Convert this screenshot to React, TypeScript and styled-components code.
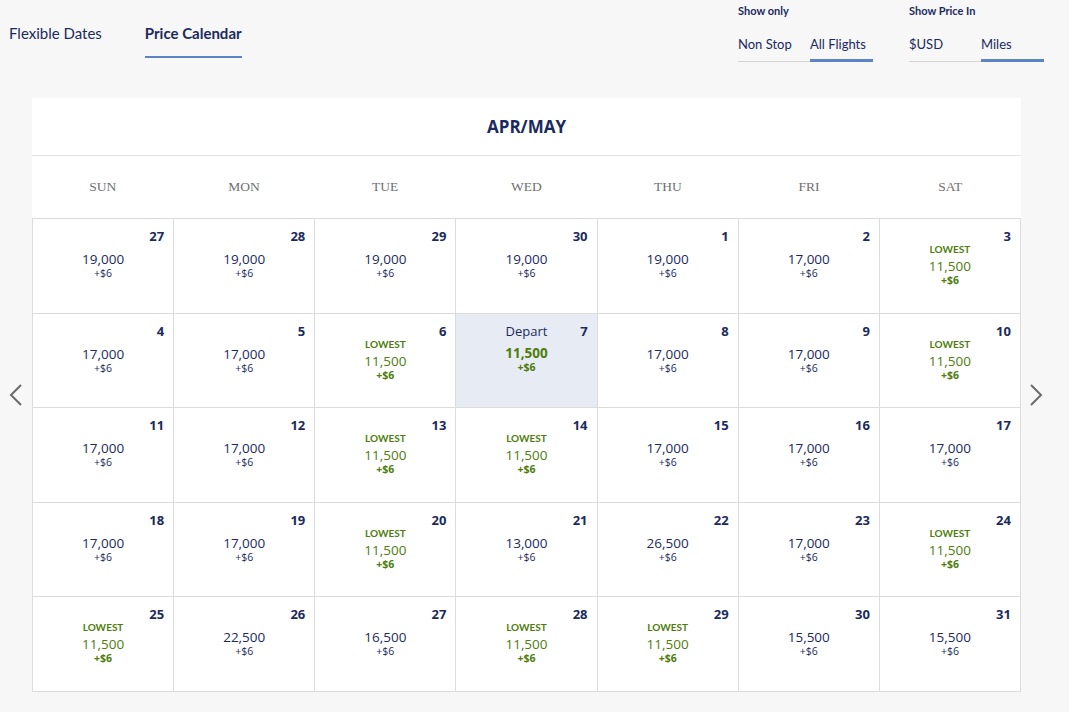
import React from 'react';
import styled, { createGlobalStyle } from 'styled-components';

const GlobalStyle = createGlobalStyle`
    html, body {
        margin: 0;
        padding: 0;
        background: #f7f7f7;
    }
    body {
        font-family: "Open Sans", "Liberation Sans", sans-serif;
        color: #1b2a5e;
    }
`;

const NAVY = '#1b2a5e';
const GREEN = '#4e7d0c';
const BLUE_BAR = '#5a84c6';

type DayKind = 'regular' | 'lowest' | 'depart';

interface Day {
    date: number;
    price: string;
    kind: DayKind;
}

const r = (date: number, price: string): Day => ({ date, price, kind: 'regular' });
const low = (date: number): Day => ({ date, price: '11,500', kind: 'lowest' });

const weeks: Day[][] = [
    [r(27, '19,000'), r(28, '19,000'), r(29, '19,000'), r(30, '19,000'), r(1, '19,000'), r(2, '17,000'), low(3)],
    [r(4, '17,000'), r(5, '17,000'), low(6), { date: 7, price: '11,500', kind: 'depart' }, r(8, '17,000'), r(9, '17,000'), low(10)],
    [r(11, '17,000'), r(12, '17,000'), low(13), low(14), r(15, '17,000'), r(16, '17,000'), r(17, '17,000')],
    [r(18, '17,000'), r(19, '17,000'), low(20), r(21, '13,000'), r(22, '26,500'), r(23, '17,000'), low(24)],
    [low(25), r(26, '22,500'), r(27, '16,500'), low(28), low(29), r(30, '15,500'), r(31, '15,500')],
];

const weekdays = ['SUN', 'MON', 'TUE', 'WED', 'THU', 'FRI', 'SAT'];

const Page = styled.div`
    width: 1069px;
    height: 712px;
    display: flex;
    flex-direction: column;
    box-sizing: border-box;
`;

const TopBar = styled.div`
    height: 98px;
    display: flex;
    justify-content: space-between;
    align-items: flex-start;
    font-family: Lato, "Open Sans", sans-serif;
`;

const ViewTabs = styled.div`
    display: flex;
    gap: 43px;
    padding: 22px 0 0 9px;
`;

const ViewTab = styled.div<{ $active?: boolean }>`
    font-size: 15px;
    line-height: 22px;
    padding-bottom: 12px;
    color: ${NAVY};
    font-weight: ${p => (p.$active ? 700 : 400)};
    border-bottom: 2px solid ${p => (p.$active ? BLUE_BAR : 'transparent')};
`;

const Filters = styled.div`
    display: flex;
    gap: 36px;
    padding: 4px 25px 0 0;
`;

const FilterGroup = styled.div`
    display: flex;
    flex-direction: column;
`;

const FilterLabel = styled.div`
    font-size: 11px;
    font-weight: 700;
    line-height: 14px;
    color: ${NAVY};
    margin-bottom: 17px;
`;

const Toggle = styled.div`
    display: flex;
    border-bottom: 1px solid #d4d4d4;
`;

const ToggleOption = styled.div<{ $active?: boolean; $w: number }>`
    width: ${p => p.$w}px;
    font-size: 13px;
    line-height: 18px;
    padding-bottom: 6px;
    color: ${NAVY};
    border-bottom: 3px solid ${p => (p.$active ? BLUE_BAR : 'transparent')};
    margin-bottom: -1px;
`;

const Stage = styled.div`
    display: grid;
    grid-template-columns: 32px 989px 30px;
    align-items: center;
`;

const Arrow = styled.button`
    background: none;
    border: none;
    padding: 0;
    display: flex;
    justify-content: center;
    align-items: center;
    cursor: pointer;
`;

const Card = styled.div`
    background: #fff;
`;

const MonthTitle = styled.div`
    height: 58px;
    display: flex;
    align-items: center;
    justify-content: center;
    font-size: 17px;
    font-weight: 700;
    color: ${NAVY};
    border-bottom: 1px solid #e4e4e4;
    box-sizing: border-box;
`;

const WeekdayRow = styled.div`
    height: 62px;
    display: grid;
    grid-template-columns: repeat(7, 1fr);
    align-items: center;
`;

const Weekday = styled.div`
    text-align: center;
    font-family: "Liberation Serif", "DejaVu Serif", serif;
    font-size: 13.5px;
    color: #707070;
`;

const Grid = styled.div`
    display: grid;
    grid-template-columns: repeat(7, 1fr);
    grid-template-rows: repeat(5, 94.6px);
    border-top: 1px solid #dcdcdc;
    border-left: 1px solid #dcdcdc;
`;

const Cell = styled.div<{ $selected?: boolean }>`
    display: grid;
    border-right: 1px solid #dcdcdc;
    border-bottom: 1px solid #dcdcdc;
    background: ${p => (p.$selected ? '#e7ebf3' : '#fff')};
    box-sizing: border-box;
`;

const DateNum = styled.div`
    grid-area: 1 / 1;
    justify-self: end;
    align-self: start;
    padding: 8px 9px 0 0;
    font-size: 13px;
    font-weight: 700;
    line-height: 18px;
    color: ${NAVY};
`;

const paddings: Record<DayKind, number> = { regular: 33, lowest: 24, depart: 8 };

const Fare = styled.div<{ $kind: DayKind }>`
    grid-area: 1 / 1;
    display: flex;
    flex-direction: column;
    align-items: center;
    padding-top: ${p => paddings[p.$kind]}px;
    color: ${p => (p.$kind === 'regular' ? NAVY : GREEN)};
`;

const Tag = styled.div`
    font-size: 10px;
    font-weight: 700;
    line-height: 12px;
    margin-bottom: 4px;
    font-family: Lato, "Open Sans", sans-serif;
`;

const DepartLabel = styled.div`
    font-size: 13px;
    line-height: 18px;
    color: ${NAVY};
    margin-bottom: 6px;
`;

const Price = styled.div<{ $bold?: boolean }>`
    font-size: 13.5px;
    line-height: 15px;
    font-weight: ${p => (p.$bold ? 700 : 400)};
`;

const Fee = styled.div<{ $strong?: boolean }>`
    font-size: 10.5px;
    line-height: 12px;
    font-weight: ${p => (p.$strong ? 700 : 400)};
`;

const Chevron = ({ dir }: { dir: 'left' | 'right' }) => (
    <svg width="14" height="22" viewBox="0 0 14 22">
        <polyline
            points={dir === 'left' ? '12,1 2,11 12,21' : '2,1 12,11 2,21'}
            fill="none"
            stroke="#6b6b6b"
            strokeWidth="2"
        />
    </svg>
);

const DayCell = ({ day }: { day: Day }) => (
    <Cell $selected={day.kind === 'depart'}>
        <DateNum>{day.date}</DateNum>
        <Fare $kind={day.kind}>
            {day.kind === 'lowest' && <Tag>LOWEST</Tag>}
            {day.kind === 'depart' && <DepartLabel>Depart</DepartLabel>}
            <Price $bold={day.kind === 'depart'}>{day.price}</Price>
            <Fee $strong={day.kind !== 'regular'}>+$6</Fee>
        </Fare>
    </Cell>
);

export default function App() {
    return (
        <>
            <GlobalStyle />
            <Page>
                <TopBar>
                    <ViewTabs>
                        <ViewTab>Flexible Dates</ViewTab>
                        <ViewTab $active>Price Calendar</ViewTab>
                    </ViewTabs>
                    <Filters>
                        <FilterGroup>
                            <FilterLabel>Show only</FilterLabel>
                            <Toggle>
                                <ToggleOption $w={72}>Non Stop</ToggleOption>
                                <ToggleOption $w={63} $active>All Flights</ToggleOption>
                            </Toggle>
                        </FilterGroup>
                        <FilterGroup>
                            <FilterLabel>Show Price In</FilterLabel>
                            <Toggle>
                                <ToggleOption $w={72}>$USD</ToggleOption>
                                <ToggleOption $w={63} $active>Miles</ToggleOption>
                            </Toggle>
                        </FilterGroup>
                    </Filters>
                </TopBar>
                <Stage>
                    <Arrow aria-label="Previous">
                        <Chevron dir="left" />
                    </Arrow>
                    <Card>
                        <MonthTitle>APR/MAY</MonthTitle>
                        <WeekdayRow>
                            {weekdays.map(w => (
                                <Weekday key={w}>{w}</Weekday>
                            ))}
                        </WeekdayRow>
                        <Grid>
                            {weeks.flat().map((day, i) => (
                                <DayCell key={i} day={day} />
                            ))}
                        </Grid>
                    </Card>
                    <Arrow aria-label="Next">
                        <Chevron dir="right" />
                    </Arrow>
                </Stage>
            </Page>
        </>
    );
}
